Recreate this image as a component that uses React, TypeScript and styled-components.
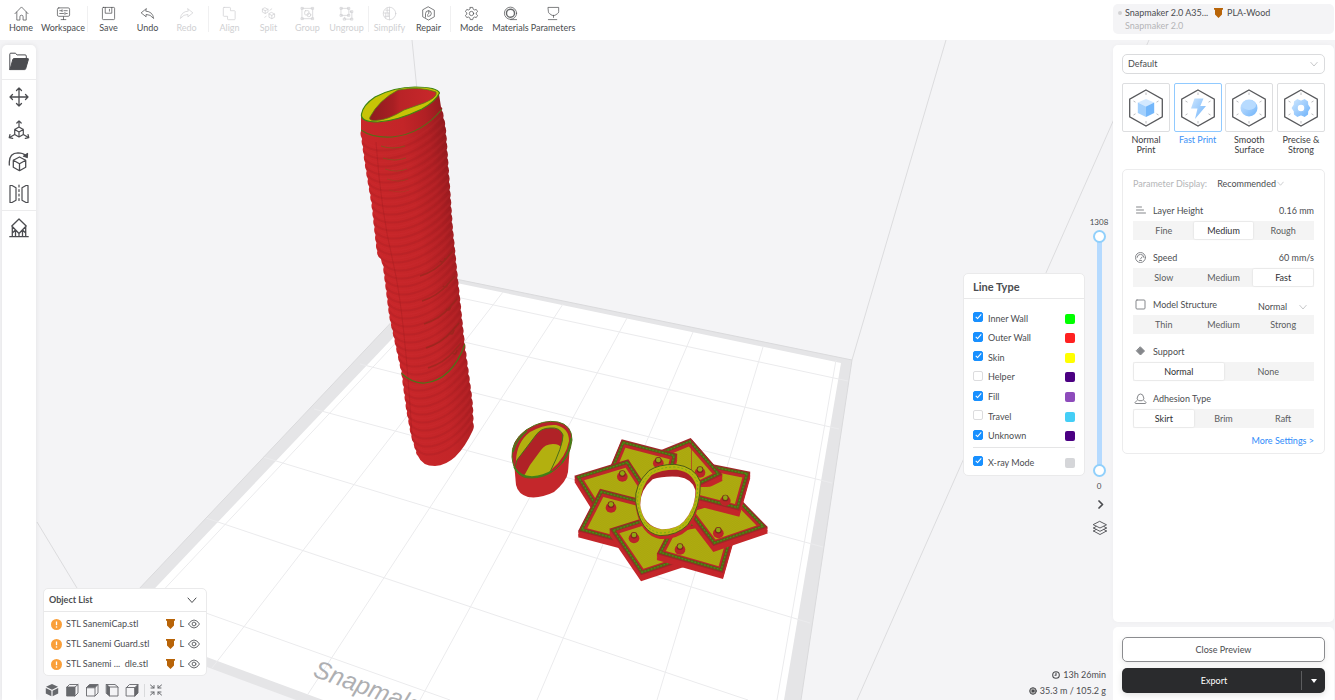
import React, { useState } from "react";
import styled, { createGlobalStyle } from "styled-components";

const Global = createGlobalStyle`
  *, *::before, *::after { box-sizing: border-box; }
  body { margin: 0; background: #f4f4f6; }
  body, button, select, input {
    font-family: Lato, "Open Sans", sans-serif;
    font-size: 9px;
    line-height: 12px;
    color: #4b4d50;
  }
  button, select { border: 0; padding: 0; background: none; cursor: pointer; }
  svg { display: block; flex: none; }
`;

/* ---------- layout ---------- */

const Page = styled.div`
  display: flex;
  flex-direction: column;
  height: 100vh;
  min-height: 700px;
  overflow: hidden;
`;

const TopBar = styled.header`
  display: flex;
  align-items: flex-start;
  justify-content: space-between;
  flex: none;
  height: 40px;
  padding-left: 1px;
  background: #fff;
`;

const ToolGroupRow = styled.nav`
  display: flex;
  align-items: center;
`;

const TopTool = styled.button<{ $width?: number }>`
  display: flex;
  flex-direction: column;
  align-items: center;
  width: ${(p) => p.$width ?? 39}px;
  padding-top: 6px;
  gap: 1px;
  white-space: nowrap;
  color: #4b4d50;
  &:disabled { color: #cfd0d2; cursor: default; }
`;

const TopDivider = styled.span`
  width: 1px;
  height: 26px;
  margin: 4px 1px 0 2px;
  background: #f0f0f1;
`;

const MachineBox = styled.section`
  display: grid;
  grid-template-columns: 93px 1fr;
  align-content: center;
  width: 221px;
  height: 30px;
  margin: 4px 1px 0 0;
  border-radius: 5px;
  background: #f4f4f6;
`;

const MachineLine = styled.div<{ $muted?: boolean }>`
  display: flex;
  align-items: center;
  gap: 3px;
  height: 13px;
  padding-left: ${(p) => (p.$muted ? 12 : 5)}px;
  white-space: nowrap;
  color: ${(p) => (p.$muted ? "#b4b5b7" : "#4b4d50")};
`;

const StatusDot = styled.i`
  flex: none;
  width: 4px;
  height: 4px;
  border-radius: 50%;
  background: #d2d2d4;
`;

const MaterialTag = styled.div`
  display: flex;
  align-items: center;
  gap: 4px;
  padding-left: 8px;
`;

const Main = styled.main`
  position: relative;
  display: grid;
  grid-template-columns: 38px 1fr 222px;
  flex: 1;
  min-height: 0;
`;

const SceneSvg = styled.svg`
  position: absolute;
  inset: 0;
  width: 100%;
  height: 100%;
`;

const SideTools = styled.nav`
  position: relative;
  display: flex;
  flex-direction: column;
  margin: 5px 2px 0;
  border-radius: 5px 5px 0 0;
  background: #fff;
  box-shadow: 0 0 5px rgba(0, 0, 0, 0.08);
`;

const SideGroup = styled.div<{ $last?: boolean }>`
  display: flex;
  flex-direction: column;
  border-bottom: ${(p) => (p.$last ? 0 : 1)}px solid #ececed;
`;

const SideTool = styled.button<{ $tall?: boolean }>`
  display: grid;
  place-items: center;
  height: ${(p) => (p.$tall ? 34 : 32)}px;
  color: #4b4c50;
`;

const Viewport = styled.section`
  position: relative;
  display: flex;
  justify-content: space-between;
`;

const Dock = styled.div`
  display: flex;
  flex-direction: column;
  align-self: flex-end;
  width: 164px;
  margin-left: 5px;
`;

const RightDock = styled.div`
  display: flex;
  flex-direction: column;
  align-items: flex-end;
  padding-top: 176px;
`;

const Floating = styled.section`
  border: 1px solid #eaeaeb;
  border-radius: 5px;
  background: #fff;
`;

/* ---------- object list ---------- */

const ObjectHeader = styled.button`
  display: flex;
  align-items: center;
  justify-content: space-between;
  width: 100%;
  height: 23px;
  padding: 0 9px 0 5px;
  border-bottom: 1px solid #e8e8e9;
  font-weight: 700;
  color: #4b4d50;
`;

const ObjectItems = styled.ul`
  margin: 0;
  padding: 2px 0 1px;
  list-style: none;
`;

const ObjectRow = styled.li`
  display: flex;
  align-items: center;
  height: 20px;
  padding: 0 6px 0 7px;
  white-space: pre;
`;

const ObjectName = styled.span`
  flex: 1;
  margin-left: 4px;
`;

const ExtruderMark = styled.span`
  display: flex;
  align-items: center;
  gap: 4px;
  margin-right: 4px;
`;

const IconButton = styled.button`
  display: grid;
  place-items: center;
  color: #66686c;
`;

const ViewButtons = styled.div`
  display: flex;
  align-items: center;
  height: 24px;
  padding: 4px 0 0 2px;
  gap: 6px;
  color: #77797e;
`;

const ViewDivider = styled.span`
  width: 1px;
  height: 13px;
  margin: 0 -2px 0 -1px;
  background: #d9dadc;
`;

/* ---------- line types ---------- */

const PreviewRow = styled.div`
  display: flex;
`;

const LinePanel = styled(Floating)`
  width: 122px;
  height: 203px;
  margin-top: 57px;
`;

const LineTitle = styled.h2`
  margin: 0;
  height: 25px;
  padding-left: 9px;
  border-bottom: 1px solid #e8e8e9;
  font-size: 11px;
  line-height: 25px;
  font-weight: 700;
  color: #4b4d50;
`;

const LineList = styled.div`
  display: flex;
  flex-direction: column;
  justify-content: space-between;
  height: 132px;
  margin: 12px 9px 0;
`;

const LineRow = styled.label`
  display: flex;
  align-items: center;
  height: 14px;
`;

const XrayArea = styled.div`
  margin: 4px 9px 0;
  padding-top: 7px;
  border-top: 1px solid #e5e5e6;
`;

const LineLabel = styled.span`
  flex: 1;
  padding: 1px 0 0 5px;
`;

const Swatch = styled.i<{ $color: string }>`
  width: 10px;
  height: 10px;
  margin-top: 1px;
  border-radius: 2px;
  background: ${(p) => p.$color};
`;

const Check = styled.input`
  appearance: none;
  display: grid;
  place-items: center;
  width: 10px;
  height: 10px;
  margin: 0 0 2px;
  border: 1px solid #dcdcde;
  border-radius: 2px;
  background: #fff;
  &:checked { border-color: #1890ff; background: #1890ff; }
  &:checked::after {
    content: "";
    width: 3px;
    height: 6px;
    margin-top: -2px;
    border: solid #fff;
    border-width: 0 1px 1px 0;
    transform: rotate(42deg);
  }
`;

/* ---------- layer slider ---------- */

const LayerColumn = styled.div`
  display: flex;
  flex-direction: column;
  align-items: center;
  width: 28px;
  font-size: 8px;
`;

const DoubleSlider = styled.div`
  display: grid;
  justify-items: center;
  width: 14px;
  height: 247px;
  margin: 2px 0 3px;
  background: linear-gradient(#b5daff, #b5daff) center / 5px 235px no-repeat;
`;

const LayerRange = styled.input`
  grid-area: 1 / 1;
  appearance: none;
  writing-mode: vertical-lr;
  direction: rtl;
  width: 14px;
  height: 247px;
  margin: 0;
  background: none;
  pointer-events: none;
  &::-webkit-slider-thumb {
    appearance: none;
    width: 13px;
    height: 13px;
    border: 2px solid #91d0fb;
    border-radius: 50%;
    background: #fff;
    pointer-events: auto;
  }
`;

const LayerButton = styled(IconButton)`
  height: 24px;
  padding-left: 2px;
  color: #4b4c50;
`;

const Stats = styled.div`
  display: flex;
  flex-direction: column;
  align-items: flex-end;
  margin-top: auto;
  padding: 0 7px 1px 0;
  color: #4b4c50;
`;

const Stat = styled.div`
  display: flex;
  align-items: center;
  gap: 3px;
  height: 16px;
`;

/* ---------- settings column ---------- */

const SettingsColumn = styled.aside`
  position: relative;
  display: flex;
  flex-direction: column;
  gap: 5px;
  padding: 5px 1px 0 0;
`;

const SettingsPanel = styled.section`
  flex: 1;
  padding: 9px 9px 0;
  border-radius: 5px;
  background: #fff;
  box-shadow: 0 0 4px rgba(0, 0, 0, 0.03);
`;

const ActionPanel = styled.section`
  display: flex;
  flex-direction: column;
  gap: 6px;
  padding: 10px 9px 7px;
  border-radius: 5px 5px 0 0;
  background: #fff;
`;

const SelectBox = styled.div<{ $framed?: boolean; $width?: string }>`
  display: flex;
  align-items: center;
  width: ${(p) => p.$width ?? "100%"};
  height: ${(p) => (p.$framed ? 20 : 16)}px;
  border: ${(p) => (p.$framed ? 1 : 0)}px solid #dadbdd;
  border-radius: 5px;
  padding-right: ${(p) => (p.$framed ? 6 : 0)}px;
  color: #b9babd;
  select {
    appearance: none;
    flex: 1;
    min-width: 0;
    height: 100%;
    padding-left: ${(p) => (p.$framed ? 5 : 0)}px;
    outline: 0;
  }
`;

const Presets = styled.div`
  display: flex;
  justify-content: space-between;
  height: 86px;
  margin-top: 9px;
`;

const Preset = styled.button<{ $active?: boolean }>`
  display: flex;
  flex-direction: column;
  align-items: center;
  width: 48px;
  line-height: 10px;
  color: ${(p) => (p.$active ? "#3d92f7" : "#3e4043")};
`;

const PresetFrame = styled.span<{ $active?: boolean }>`
  display: grid;
  place-items: center;
  width: 48px;
  height: 49px;
  margin-bottom: 3px;
  border: 1px solid ${(p) => (p.$active ? "#91caff" : "#dddee0")};
  border-radius: 2px;
`;

const ParamCard = styled.section`
  padding: 4px 10px 0;
  border: 1px solid #ececed;
  border-radius: 5px;
`;

const DisplayRow = styled.label`
  display: flex;
  align-items: center;
  gap: 10px;
  height: 19px;
  color: #b4b5b7;
`;

const ParamBlock = styled.div`
  margin-top: 7px;
`;

const ParamHead = styled.div`
  display: flex;
  align-items: center;
  height: 21px;
  padding-left: 1px;
`;

const ParamName = styled.span`
  flex: 1;
  padding-left: 6px;
`;

const LowSelect = styled.div`
  padding: 5px 7px 0 0;
`;

const Segments = styled.div`
  display: flex;
  height: 19px;
  padding: 1px;
  background: #f4f4f4;
`;

const Segment = styled.button<{ $active?: boolean }>`
  flex: 1;
  color: ${(p) => (p.$active ? "#2f3033" : "#5b5d60")};
  background: ${(p) => (p.$active ? "#fff" : "transparent")};
  box-shadow: ${(p) => (p.$active ? "0 0 2px rgba(0,0,0,.15)" : "none")};
  border-radius: 1px;
`;

const MoreRow = styled.div`
  display: flex;
  justify-content: flex-end;
  align-items: center;
  height: 25px;
  a { color: #2f8cfa; text-decoration: none; }
`;

const CloseButton = styled.button`
  height: 25px;
  border: 1px solid #8b8c8f;
  border-radius: 5px;
  background: #fff;
  box-shadow: 0 2px 6px rgba(0, 0, 0, 0.08);
`;

const ExportGroup = styled.div`
  display: flex;
  align-items: center;
  height: 25px;
  border-radius: 5px;
  background: #2a2b2d;
  box-shadow: 0 2px 6px rgba(0, 0, 0, 0.12);
`;

const ExportButton = styled.button`
  flex: 1;
  height: 19px;
  padding-left: 5px;
  border-right: 1px solid #5c5d5f;
  color: #fff;
`;

const ExportMenu = styled.button`
  display: grid;
  place-items: center;
  width: 23px;
  height: 25px;
  color: #fff;
`;

/* ---------- icons ---------- */

type IconProps = { size?: number; w?: number; box?: number; children: React.ReactNode };
const Icon = ({ size = 16, w = 1, box = 16, children }: IconProps) => (
  <svg width={size} height={size} viewBox={`0 0 ${box} ${box}`} fill="none" stroke="currentColor"
    strokeWidth={w} strokeLinecap="round" strokeLinejoin="round" aria-hidden="true">{children}</svg>
);

const topIcons: Record<string, React.ReactNode> = {
  Home: <path d="M1 8.2 8 1l7 7.2M3 6.5V15h3.3v-3.5q0-1.7 1.7-1.7t1.7 1.7V15H13V6.5" />,
  Workspace: <><rect x="1.5" y="2" width="13" height="9" rx="1.5" /><path d="M4 5h2m2.500 0H12M4 8h4m2.500 0H12M6.500 4v2M9.500 7v2M5.500 14.500h5M8 11.500v3" /></>,
  Save: <><rect x="1.500" y="1.500" width="13" height="13" rx="1" /><path d="M4.500 1.500v6.200h7V1.500M9 3.500v2" /></>,
  Undo: <path d="M6.500 3 1.200 7.300l5.300 4.200V9q4.500-.2 8 4.300Q13.700 6 6.500 5.500Z" />,
  Redo: <path d="M9.500 3l5.300 4.300-5.300 4.200V9Q5 8.800 1.500 13.300 2.300 6 9.500 5.500Z" />,
  Align: <path d="M2.200 1.500h6q.8 0 .8.800V5h4.200q.8 0 .8.800v8q0 .8-.8.800H6.700q-.8 0-.8-.8V11H2.200q-.8 0-.8-.8v-8Q1.500 1.500 2.200 1.500Z" />,
  Split: <path d="M4.500 2 7.500 3.500v3l-3 1.500-3-1.500v-3ZM1.500 3.500l3 1.500 3-1.500M4.500 5v3M11.500 7l3 1.500v3.500l-3 1.500-3-1.500V8.500ZM8.500 8.500l3 1.500 3-1.500M11.500 10v3.500M9.500 4.500l2-1.500M4 12l1.500-1" />,
  Group: <><rect x="2.500" y="2.500" width="11" height="11" /><path d="M1.500 1.500h2v2h-2ZM12.500 1.500h2v2h-2ZM1.500 12.500h2v2h-2ZM12.500 12.500h2v2h-2Z" /><rect x="5" y="5" width="4.500" height="4.500" rx="1" /><circle cx="9.500" cy="9.500" r="2" /></>,
  Ungroup: <><rect x="2.500" y="2.500" width="8" height="7.500" /><path d="M12 6h1.700v8H6v-2M1.500 1.500h2v2h-2ZM9.500 1.500h2v2h-2ZM1.500 9h2v2h-2ZM9.500 9h2v2h-2ZM12.700 5h2v2h-2ZM12.700 13h2v2h-2ZM5 13h2v2H5Z" /></>,
  Simplify: <><circle cx="8" cy="8" r="6.700" /><path d="M8 1.300v13.400M8 4.500H4M8 7.500H1.500M8 11H3M5.500 2v5M4 7.500V13M6.500 7.500V11" /></>,
  Repair: <><path d="M8 1l6.200 3.500v7L8 15l-6.200-3.500v-7Z" /><path d="M4.800 12V8.200Q5 5 8 5q2.800.2 3 3-.2 3-3 3L6.800 10.500M8.300 5.200V8L7 9.200" /></>,
  Mode: <><path d="M6.700 1.500h2.600l.5 1.900 1.400.8 1.900-.5 1.400 2.300L13 7.300v1.400l1.500 1.300-1.400 2.300-1.900-.5-1.400.8-.5 1.900H6.700l-.5-1.900-1.400-.8-1.900.5L1.500 10 3 8.700V7.300L1.500 6l1.400-2.300 1.900.5 1.400-.8Z" /><circle cx="8" cy="8" r="2.300" /></>,
  Materials: <><circle cx="8" cy="7.700" r="6.500" /><circle cx="8" cy="7.700" r="4.300" strokeWidth="1.500" /><path d="M8 14.500h6.500" /></>,
  Parameters: <><path d="M2.500 1.500h11V6q0 1.500-1.300 2.200L9.500 10h-3L3.800 8.200Q2.500 7.500 2.500 6ZM8 10v2.200M2.500 14.500h9" /></>,
};

const FolderIcon = () => (
  <Icon size={20} box={20}><path d="M.8 17V2.200q0-1 1-1h4.500l1.800 1.700h8q1.200 0 1.200 1.200V6.500" /><path fill="currentColor" d="M1 17.500 3.800 7.500q.3-1 1.300-1h13.700q.8 0 .6.900l-2.700 9.300q-.3.900-1.200.9H1Z" /></Icon>
);
const MoveIcon = () => (
  <Icon size={20} box={20} w={1.3}><path d="M10 1v18M1 10h18M7.500 3.500 10 1l2.500 2.500M7.500 16.500 10 19l2.500-2.500M3.500 7.500 1 10l2.500 2.500M16.500 7.500 19 10l-2.500 2.500" /></Icon>
);
const ScaleIcon = () => (
  <Icon size={22} box={22} w={1.200}><path d="M11 8l4.300 2.500v5L11 18l-4.300-2.500v-5ZM6.700 10.500 11 13l4.300-2.500M11 13v5M11 8V2M8.800 4 11 1.800 13.200 4M6.700 15.500 1.500 18.500M2 15.500l-.8 3.200 3.500.6M15.300 15.500l5.200 3M20 15.500l.8 3.200-3.500.6" /></Icon>
);
const RotateIcon = () => (
  <Icon size={22} box={22} w={1.300}><path d="M11.500 6l6.200 3.300v7l-6.200 3.400-6.200-3.400v-7ZM5.300 9.300l6.200 3.500 6.200-3.500M11.500 12.800v6.900M1.300 14V11Q1.500 2 10 1.800q5 0 7.500 2.500" /><path fill="currentColor" d="m19.500 2.500-.3 4-3.700-1.300Z" /></Icon>
);
const MirrorIcon = () => (
  <Icon size={20} box={20} w={1.200}><path d="M1 1.500h2l4 2.200v12.600l-4 2.200H1ZM19 1.500h-2l-4 2.200v12.600l4 2.200h2Z" /><path d="M10 1v18" strokeDasharray="2 2.500" /></Icon>
);
const SupportIcon = () => (
  <Icon size={20} box={20} w={1.300}><path d="M10 1l7.200 7L10 15.500 2.800 8ZM.8 18.700h18.400M3.300 9v9.500M6.500 12v6.500M10 16v2.500M13.500 12v6.500M16.700 9v9.500M3.300 15l3.200-3M16.700 15l-3.200-3" /></Icon>
);

const Down = ({ size = 8 }: { size?: number }) => <Icon size={size} box={10}><path d="M1 3l4 4.500L9 3" /></Icon>;

const Nozzle = () => (
  <svg width="9" height="10" viewBox="0 0 9 10" aria-hidden="true"><path fill="#b86408" d="M0 0h9v1.800H8v4.700L4.500 10 1 6.500V1.800H0Z" /></svg>
);
const Warning = () => (
  <svg width="11" height="11" viewBox="0 0 11 11" aria-hidden="true"><circle cx="5.500" cy="5.500" r="5.500" fill="#fa9f39" /><path d="M5.500 2.500v3.700" stroke="#fff" strokeWidth="1.300" /><circle cx="5.500" cy="8" r=".8" fill="#fff" /></svg>
);
const Eye = () => (
  <Icon size={12} box={12}><path d="M.5 6Q3 2 6 2t5.500 4Q9 10 6 10T.5 6Z" /><circle cx="6" cy="6" r="1.900" /></Icon>
);

const cubeViews: Record<string, React.ReactNode> = {
  Isometric: <><path d="M7 1l6 2.800L7 6.700 1 3.800ZM.8 5l5.600 2.700v5.600L.8 10.500ZM13.200 5 7.600 7.700v5.600l5.600-2.800Z" fill="currentColor" stroke="none" /></>,
  Front: <><path d="M2 4h8v9H2Z" fill="currentColor" /><path d="M2 4l2.500-2.500H13V10l-3 3M10 4l3-2.500" /></>,
  Top: <><path d="M1.500 4.500 4.500 1.500H13l-3 3Z" fill="currentColor" /><path d="M1.500 4.500V13H10V4.500M13 1.500V10l-3 3" /></>,
  Left: <><path d="M1.500 1.500 4.500 4v9l-3-2.500Z" fill="currentColor" /><path d="M4.500 4H13v9H4.500M1.500 1.500H10L13 4" /></>,
  Right: <><path d="M10 4.500l3-3V10l-3 3Z" fill="currentColor" /><path d="M1.500 4.500H10V13H1.500ZM1.500 4.500l3-3H13" /></>,
};

const HexFrame = ({ children }: { children: React.ReactNode }) => (
  <svg width="36" height="38" viewBox="0 0 36 38" fill="none" aria-hidden="true">
    <defs>
      <linearGradient id="blue" x1="0" y1="0" x2="1" y2="1"><stop offset="0" stopColor="#cbe5ff" /><stop offset="1" stopColor="#71b4fa" /></linearGradient>
    </defs>
    <path d="M18 1l16.300 9.200v17.600L18 37 1.700 27.800V10.200Z" stroke="#58595c" strokeWidth="1.300" />
    <path d="M18 3.500v2.500M18 32v2.500M5.500 12l2 1.200M28.500 13.200l2-1.200M5.500 26l2-1.200M28.500 24.800l2 1.200" stroke="#bcbdc0" strokeWidth="1" />
    {children}
  </svg>
);

const presetArt: Record<string, React.ReactNode> = {
  cube: <><path d="M18 10l8.200 3.500L18 17.500l-8.200-4Z" fill="#d3e9ff" /><path d="M9.800 13.500l8.200 4V28l-8.200-4Z" fill="#a2d0fd" /><path d="M26.200 13.500l-8.200 4V28l8.200-4Z" fill="#73b7fb" /></>,
  bolt: <path d="M14.500 9.500h9L20.300 17h5.700L15 30l2.500-10.500H11Z" fill="url(#blue)" />,
  ball: <><circle cx="18" cy="19" r="8.500" fill="url(#blue)" /><ellipse cx="18" cy="16" rx="7" ry="5" fill="#b7dbff" /></>,
  gear: <path fillRule="evenodd" stroke="url(#blue)" strokeWidth="1.500" strokeLinejoin="round" fill="url(#blue)" d="M14.500 10.800 18 12.500l3.500-1.700 2.800 2 .2 3.200L26.500 19l-2 3-.2 3.200-2.800 2L18 25.500l-3.500 1.700-2.800-2-.2-3.200L9.500 19l2-3 .2-3.200ZM18 15a3.800 3.800 0 1 0 0 8 3.800 3.800 0 1 0 0-8Z" />,
};

const paramIcons: Record<string, React.ReactNode> = {
  "Layer Height": <path d="M2.500 3h5M2.500 6h7M2.500 9h9" />,
  Speed: <><circle cx="6.500" cy="6.500" r="5" /><path d="M3 6.500Q3.500 3.500 6.500 3.300 9.500 3.500 10 6.500M6.500 8l1.500-2M5.500 9.500h2" /></>,
  "Model Structure": <rect x="2" y="2" width="9" height="9" rx="1" />,
  Support: <path d="M6.500 2l4 4-4 4-4-4Z" fill="currentColor" />,
  "Adhesion Type": <><path d="M4.500 8.500Q2 7 3.500 5 4 2 6.500 2t3 3q1.500 2-1 3.500ZM3 8.500 1 10.500q0 1 1 1h9q1 0 1-1l-2-2" /></>,
};

/* ---------- 3D scene ---------- */

type Pt = [number, number];

const bedLines: [number, number, number, number][] = [
  [433, 292, 848, 381], [408, 329, 839, 429], [360, 364, 832, 483], [314, 409, 823, 547],
  [263, 457, 810, 623], [206, 518, 748, 700], [147, 592, 450, 700],
  [140, 615, 452, 283], [503, 292, 212, 668], [563, 304, 308, 694], [627, 318, 420, 700],
  [693, 332, 537, 700], [763, 347, 657, 700], [836, 360, 777, 700],
];
const volumeLines: [number, number, number, number][] = [
  [412, 40, 417, 90], [946, 40, 852, 360], [1149, 40, 857, 700], [37, 522, 80, 593],
];

const leftEdge: Pt[] = [[361, 131], [366, 167], [372, 203], [378, 256], [383, 261], [390, 317], [402, 372], [407, 410], [412, 437], [418, 456]];
const rightEdge: Pt[] = [[441, 107], [445, 127], [452, 227], [457, 277], [464, 343], [472, 403], [473, 430]];

const walk = (edge: Pt[], y: number): number => {
  for (let i = 1; i < edge.length; i++) {
    const [x0, y0] = edge[i - 1];
    const [x1, y1] = edge[i];
    if (y <= y1) return x0 + ((x1 - x0) * (y - y0)) / (y1 - y0);
  }
  return edge[edge.length - 1][0];
};

/* Scalloped silhouette: small bumps of the wrapped handle along one side. */
const scallop = (edge: Pt[], out: number): string => {
  const end = edge[edge.length - 1][1];
  let d = "";
  for (let y = edge[0][1]; y < end; y += 8) {
    const next = Math.min(y + 8, end);
    const mid = (y + next) / 2;
    d += ` Q${(walk(edge, mid) + out * 2).toFixed(1)} ${mid.toFixed(1)} ${walk(edge, next).toFixed(1)} ${next}`;
  }
  return d;
};
const reverseScallop = (edge: Pt[], out: number): string => {
  const start = edge[0][1];
  let d = "";
  for (let y = edge[edge.length - 1][1]; y > start; y -= 8) {
    const next = Math.max(y - 8, start);
    const mid = (y + next) / 2;
    d += ` Q${(walk(edge, mid) + out * 2).toFixed(1)} ${mid.toFixed(1)} ${walk(edge, next).toFixed(1)} ${next}`;
  }
  return d;
};

const handlePath =
  `M361 115V131${scallop(leftEdge, -1)}Q422 466 435 466 457 465 473 430${reverseScallop(rightEdge, 1)}L439 94Z`;
const rib = (y: number) => {
  const x = walk(leftEdge, y);
  const e = walk(rightEdge, y - 22);
  const w = e - x;
  return `M${x} ${y}C${x + w * 0.12} ${y + 14} ${x + w * 0.62} ${y + 10} ${e} ${y - 24}`;
};
const ribs = Array.from({ length: 78 }, (_, i) => rib(139 + i * 4));

const insetQuad = (q: Pt[], d: number): Pt[] => {
  const area = q.reduce((s, p, i) => s + p[0] * q[(i + 1) % 4][1] - q[(i + 1) % 4][0] * p[1], 0);
  const sign = area > 0 ? 1 : -1;
  const lines = q.map((p, i) => {
    const n = q[(i + 1) % 4];
    const dx = n[0] - p[0];
    const dy = n[1] - p[1];
    const len = Math.hypot(dx, dy);
    return { x: p[0] - (sign * dy * d) / len, y: p[1] + (sign * dx * d) / len, dx, dy };
  });
  return lines.map((b, i) => {
    const a = lines[(i + 3) % 4];
    const t = ((b.x - a.x) * b.dy - (b.y - a.y) * b.dx) / (a.dx * b.dy - a.dy * b.dx);
    return [a.x + a.dx * t, a.y + a.dy * t] as Pt;
  });
};
const pts = (q: Pt[]) => q.map((p) => p.map((n) => n.toFixed(1)).join(",")).join(" ");

const petals: { quad: Pt[]; peg: Pt }[] = [
  { quad: [[572, 84], [668, 194], [530, 262], [430, 142]], peg: [600, 185] },
  { quad: [[365, 88], [532, 131], [500, 260], [310, 220]], peg: [475, 157] },
  { quad: [[385, 148], [223, 197], [300, 320], [465, 270]], peg: [367, 197] },
  { quad: [[300, 236], [234, 364], [390, 405], [470, 280]], peg: [333, 290] },
  { quad: [[328, 356], [423, 496], [590, 440], [490, 305]], peg: [402, 382] },
  { quad: [[515, 345], [470, 432], [669, 489], [720, 310]], peg: [540, 416] },
  { quad: [[550, 290], [640, 408], [804, 352], [700, 245]], peg: [655, 367] },
  { quad: [[751, 185], [718, 302], [560, 262], [590, 153]], peg: [676, 270] },
];

const Petal = ({ quad, peg }: { quad: Pt[]; peg: Pt }) => (
  <g>
    {[18, 14, 10, 6, 3].map((dy) => <polygon key={dy} points={pts(quad)} transform={`translate(0 ${dy})`} fill="#c4262a" />)}
    <polygon points={pts(quad)} fill="#a3232a" />
    <polygon points={pts(insetQuad(quad, 8))} fill="none" stroke="#625a16" strokeWidth="9" />
    <polygon points={pts(insetQuad(quad, 8))} fill="none" stroke="#3f9a14" strokeWidth="4" strokeDasharray="5 5" />
    <polygon points={pts(insetQuad(quad, 13))} fill="#be262a" />
    <polygon points={pts(insetQuad(quad, 19))} transform="translate(0 3)" fill="url(#skin)" />
    <ellipse cx={peg[0]} cy={peg[1] + 3} rx="16" ry="15" fill="#bd2428" />
    <circle cx={peg[0]} cy={peg[1] - 6} r="10" fill="#7d2a1c" />
    <circle cx={peg[0]} cy={peg[1] - 7} r="7" fill="#8fa812" />
  </g>
);

const Scene = () => (
  <SceneSvg viewBox="0 40 1335 660" preserveAspectRatio="xMidYMid slice" role="img" aria-label="Print preview">
    <defs>
      <linearGradient id="handleShade" gradientUnits="userSpaceOnUse" x1="372" y1="260" x2="464" y2="246">
        <stop offset="0" stopColor="#c9272a" /><stop offset=".55" stopColor="#c32528" /><stop offset=".8" stopColor="#b12024" /><stop offset="1" stopColor="#931b1f" />
      </linearGradient>
      <linearGradient id="cavity" x1="0" y1="0" x2="1" y2="0"><stop offset="0" stopColor="#8e1c1f" /><stop offset=".35" stopColor="#a81f23" /><stop offset=".45" stopColor="#b92327" /><stop offset="1" stopColor="#c9282b" /></linearGradient>
      <pattern id="skin" width="5" height="5" patternUnits="userSpaceOnUse" patternTransform="rotate(35)"><rect width="5" height="5" fill="#b1ae0f" /><path d="M0 2h5" stroke="#9f9c0e" strokeWidth="1.500" /></pattern>
      <clipPath id="topPetal"><rect x="575" y="60" width="120" height="170" /></clipPath>
      <clipPath id="handleClip"><path d={handlePath} /></clipPath>
    </defs>
    <rect x="-400" y="40" width="2200" height="660" fill="#f4f4f6" />
    <polygon points="436,275 852,360 801,700 296,700 102,628" fill="#e5e5e7" />
    <polygon points="447,281 841,363 784,700 323,700 120,625" fill="#fff" />
    <g stroke="#ebebed" strokeWidth="1">{bedLines.map(([a, b, c, d], i) => <line key={i} x1={a} y1={b} x2={c} y2={d} />)}</g>
    <g stroke="#dcdcde" strokeWidth="1">
      {volumeLines.map(([a, b, c, d], i) => <line key={i} x1={a} y1={b} x2={c} y2={d} />)}
      <path d="M102 628 436 275 852 360 801 700" fill="none" stroke="#dadadc" />
    </g>
    <text x="312" y="676" transform="rotate(20 312 676)" fontFamily="Liberation Sans, sans-serif" fontStyle="italic" fontSize="25" fill="#aeafb2">Snapmaker</text>

    <path d={handlePath} fill="url(#handleShade)" />
    <g clipPath="url(#handleClip)" fill="none">
      {ribs.map((d, i) => <path key={i} d={d} stroke={i % 2 ? "#8d171b" : "#d93436"} strokeOpacity={i % 2 ? 0.17 : 0.12} strokeWidth="2" />)}
      {[146, 158, 169, 179, 190].map((y, i) => <path key={y} d={`M${381 + i * 2} ${y}q12 4 ${24 - i} 0`} stroke="#7a5a1c" strokeWidth="1" strokeOpacity={0.8 - i * 0.14} />)}
      {[260, 285, 308, 332, 352].map((y, i) => <path key={y} d={`M${420 + i * 2} ${y + 16}q16-5 26-17l7-8M${440 + i * 3} ${y + 1}q4 3 5-3`} stroke="#8b2a1b" strokeWidth="1.500" strokeOpacity=".6" />)}
      <path d="M376 142q5 70 17 120t20 190" stroke="#951b1f" strokeOpacity=".3" />
      <path d="M361 130Q372 138 392 137 422 134 442 109" stroke="#596b18" strokeWidth="1.200" />
      <path d="M401 373Q413 384 425 383 452 380 465 344" stroke="#4c7418" strokeWidth="1.200" />
    </g>
    <path d="M361.500 114Q363 105 375 97 394 87 415 87q22 0 24.500 6Q436 101 422 109 397 121 378 122 360 122 361.500 114Z" fill="#c7c306" stroke="#3e8414" strokeWidth="1.200" />
    <path d="M370 117Q379 100 398 90 420 86 436 92 438 97 424 103L404 110Q388 120 376 120.500 368 121 370 117Z" fill="url(#cavity)" stroke="#5c7a14" strokeWidth=".8" />

    <path d="M514 462 516 485Q518 494 528 497 540 499 554 492 567 481 568 472L570 445Z" fill="#c4272b" />
    <path d="M512 457Q511 441 526 430 543 419 558 422 572 425 572 440 570 458 556 469 545 478 532 478 514 479 512 457Z" fill="#b7242a" stroke="#4d7716" />
    <path d="M516 460Q517 442 530 432 544 424 556 425 569 428 569 441 566 457 552 469 541 476 530 475 517 475 516 460Z" fill="#b3b00f" />
    <path d="M515 467 517 460 536 435Q541 428 550 428 560 427 563 435 563 446 550 472 538 478 526 475 517 473 515 467Z" fill="#b02227" />
    <path d="M524 476 530 465 541 450Q545 444 553 444 560 444 561 448 558 460 550 472 536 479 524 476Z" fill="#b3b00f" />
    <path d="M515 467 517 460 536 435Q541 428 550 428 560 427 563 435 563 446 550 472" fill="none" stroke="#4b6c18" />
    <path d="M513 452Q517 438 527 431M571 438Q570 451 562 463M514 467Q520 477 532 477 544 476 552 471" fill="none" stroke="#3c8418" strokeWidth="1.500" />

    <g transform="translate(500 410) scale(.33333)">
      {petals.map((p, i) => <Petal key={i} {...p} />)}
      <g clipPath="url(#topPetal)"><Petal {...petals[0]} /></g>
      <path d="M407 290Q402 235 447 187 480 163 530 165 590 175 601 215 603 300 566 358 530 390 480 387 420 375 407 290Z" fill="#c4262a" />
      <path d="M407 275Q402 225 447 182 475 163 525 163 585 170 601 215 603 290 563 345 530 377 480 377 420 368 407 275Z" fill="#b5b40f" stroke="#4c5c16" strokeWidth="3" />
      <path d="M413 275Q410 230 452 190 480 171 525 171 578 177 593 218 595 290 558 338 528 369 480 369 424 360 413 275Z" fill="none" stroke="#6fae14" strokeWidth="3" strokeDasharray="6 6" />
      <path d="M421 280Q422 228 455 195 485 178 530 179 575 185 588 225 592 280 556 330 528 360 485 358 425 350 421 280Z" fill="#ac2227" />
      <path d="M421 285Q420 240 458 208 490 197 535 200 577 206 586 240 588 290 552 334 528 359 485 358 428 347 421 285Z" fill="#fff" />
    </g>
  </SceneSvg>
);

/* ---------- data ---------- */

const lineTypes: [string, string, boolean][] = [
  ["Inner Wall", "#00ff00", true], ["Outer Wall", "#ff2121", true], ["Skin", "#ffff00", true],
  ["Helper", "#4b0082", false], ["Fill", "#8d4bbb", true], ["Travel", "#44cef6", false], ["Unknown", "#4b0082", true],
];

const params: { name: string; value?: string; select?: boolean; options: string[]; active?: string }[] = [
  { name: "Layer Height", value: "0.16 mm", options: ["Fine", "Medium", "Rough"], active: "Medium" },
  { name: "Speed", value: "60 mm/s", options: ["Slow", "Medium", "Fast"], active: "Fast" },
  { name: "Model Structure", select: true, options: ["Thin", "Medium", "Strong"] },
  { name: "Support", options: ["Normal", "None"], active: "Normal" },
  { name: "Adhesion Type", options: ["Skirt", "Brim", "Raft"], active: "Skirt" },
];

const toolGroups: { label: string; disabled?: boolean; width?: number }[][] = [
  [{ label: "Home", width: 40 }, { label: "Workspace", width: 44 }],
  [{ label: "Save" }, { label: "Undo" }, { label: "Redo", disabled: true }],
  [{ label: "Align", disabled: true }, { label: "Split", disabled: true }, { label: "Group", disabled: true }, { label: "Ungroup", disabled: true }],
  [{ label: "Simplify", disabled: true }, { label: "Repair" }],
  [{ label: "Mode" }, { label: "Materials" }, { label: "Parameters", width: 46 }],
];

const LineCheck = ({ label, color, initial }: { label: string; color: string; initial: boolean }) => {
  const [on, setOn] = useState(initial);
  return (
    <LineRow>
      <Check type="checkbox" checked={on} onChange={() => setOn(!on)} />
      <LineLabel>{label}</LineLabel>
      <Swatch $color={color} />
    </LineRow>
  );
};

const ParamSetting = ({ name, value, select, options, active }: (typeof params)[number]) => {
  const [chosen, setChosen] = useState(active);
  return (
    <ParamBlock>
      <ParamHead>
        <Icon size={13} box={13} w={1}><g stroke="#85878b" color="#85878b">{paramIcons[name]}</g></Icon>
        <ParamName>{name}</ParamName>
        {value}
        {select && (
          <LowSelect>
            <SelectBox $width="49px">
              <select aria-label={name}><option>Normal</option></select>
              <Down />
            </SelectBox>
          </LowSelect>
        )}
      </ParamHead>
      <Segments>
        {options.map((o) => (
          <Segment key={o} $active={o === chosen} aria-pressed={o === chosen} onClick={() => setChosen(o)}>{o}</Segment>
        ))}
      </Segments>
    </ParamBlock>
  );
};

export default function App() {
  const [top, setTop] = useState(1308);
  const [bottom, setBottom] = useState(0);
  const [preset, setPreset] = useState("Fast Print");

  return (
    <Page>
      <Global />
      <TopBar>
        <ToolGroupRow>
          {toolGroups.map((group, g) => (
            <React.Fragment key={g}>
              {g > 0 && <TopDivider />}
              {group.map((t) => (
                <TopTool key={t.label} $width={t.width} disabled={t.disabled}>
                  <Icon size={15} w={0.9}><g strokeOpacity=".85">{topIcons[t.label]}</g></Icon>
                  {t.label}
                </TopTool>
              ))}
            </React.Fragment>
          ))}
        </ToolGroupRow>
        <MachineBox>
          <MachineLine><StatusDot />Snapmaker 2.0 A35...</MachineLine>
          <MaterialTag><Nozzle />PLA-Wood</MaterialTag>
          <MachineLine $muted>Snapmaker 2.0</MachineLine>
        </MachineBox>
      </TopBar>

      <Main>
        <Scene />
        <SideTools>
          <SideGroup><SideTool $tall aria-label="Open"><FolderIcon /></SideTool></SideGroup>
          <SideGroup>
            <SideTool $tall aria-label="Move"><MoveIcon /></SideTool>
            <SideTool aria-label="Scale"><ScaleIcon /></SideTool>
            <SideTool aria-label="Rotate"><RotateIcon /></SideTool>
            <SideTool aria-label="Mirror"><MirrorIcon /></SideTool>
          </SideGroup>
          <SideGroup $last><SideTool $tall aria-label="Support"><SupportIcon /></SideTool></SideGroup>
        </SideTools>

        <Viewport>
          <Dock>
            <Floating>
              <ObjectHeader>Object List<Down size={10} /></ObjectHeader>
              <ObjectItems>
                {["STL SanemiCap.stl", "STL Sanemi Guard.stl", "STL Sanemi ...  dle.stl"].map((n) => (
                  <ObjectRow key={n}>
                    <Warning />
                    <ObjectName>{n}</ObjectName>
                    <ExtruderMark><Nozzle />L</ExtruderMark>
                    <IconButton aria-label={`Show ${n}`}><Eye /></IconButton>
                  </ObjectRow>
                ))}
              </ObjectItems>
            </Floating>
            <ViewButtons>
              {Object.entries(cubeViews).map(([name, art]) => (
                <IconButton key={name} aria-label={name}><Icon size={14} box={14} w={0.9}>{art}</Icon></IconButton>
              ))}
              <ViewDivider />
              <IconButton aria-label="Fit view">
                <Icon size={14} box={14}><path d="M1.500 2l3.500 3M5 2.500V5H2M12.500 2 9 5M9 2.500V5h3M1.500 12 5 9M5 11.500V9H2M12.500 12 9 9M9 11.500V9h3" /></Icon>
              </IconButton>
            </ViewButtons>
          </Dock>

          <RightDock>
            <PreviewRow>
              <LinePanel>
                <LineTitle>Line Type</LineTitle>
                <LineList>
                  {lineTypes.map(([label, color, on]) => <LineCheck key={label} label={label} color={color} initial={on} />)}
                </LineList>
                <XrayArea><LineCheck label="X-ray Mode" color="#d5d6d9" initial /></XrayArea>
              </LinePanel>
              <LayerColumn>
                {top}
                <DoubleSlider>
                  <LayerRange type="range" aria-label="Last layer" min={0} max={1308} value={top} onChange={(e) => setTop(+e.target.value)} />
                  <LayerRange type="range" aria-label="First layer" min={0} max={1308} value={bottom} onChange={(e) => setBottom(+e.target.value)} />
                </DoubleSlider>
                {bottom}
                <LayerButton aria-label="Collapse"><Icon size={9} box={9} w={1.7}><path d="M3 1l3.500 3.500L3 8" /></Icon></LayerButton>
                <LayerButton aria-label="Layers"><Icon size={16} w={0.9}><path d="M8 1.500l6.500 3.300L8 8 1.500 4.800ZM1.500 8 8 11.300 14.500 8M1.500 11 8 14.500l6.500-3.500M1.500 8l2.500-1.500M14.500 8 12 6.500M1.500 11 4 9.500M14.500 11 12 9.500" /></Icon></LayerButton>
              </LayerColumn>
            </PreviewRow>
            <Stats>
              <Stat><Icon size={8} box={8} w={1.100}><circle cx="4" cy="4" r="3.300" /><path d="M4 2v2.200H3" /></Icon>13h 26min</Stat>
              <Stat><Icon size={8} box={8} w={1}><circle cx="4" cy="4" r="3.300" fill="#aaa" /><circle cx="4" cy="4" r="1" fill="#222" /></Icon>35.3 m / 105.2 g</Stat>
            </Stats>
          </RightDock>
        </Viewport>

        <SettingsColumn>
          <SettingsPanel>
            <SelectBox $framed>
              <select aria-label="Profile"><option>Default</option></select>
              <Down />
            </SelectBox>
            <Presets>
              {[["Normal Print", "cube"], ["Fast Print", "bolt"], ["Smooth Surface", "ball"], ["Precise & Strong", "gear"]].map(([label, art]) => (
                <Preset key={label} $active={label === preset} onClick={() => setPreset(label)}>
                  <PresetFrame $active={label === preset}><HexFrame>{presetArt[art]}</HexFrame></PresetFrame>
                  {label}
                </Preset>
              ))}
            </Presets>
            <ParamCard>
              <DisplayRow>
                Parameter Display:
                <SelectBox $width="67px">
                  <select><option>Recommended</option></select>
                  <Down size={7} />
                </SelectBox>
              </DisplayRow>
              {params.map((p) => <ParamSetting key={p.name} {...p} />)}
              <MoreRow><a href="#more">More Settings &gt;</a></MoreRow>
            </ParamCard>
          </SettingsPanel>
          <ActionPanel>
            <CloseButton>Close Preview</CloseButton>
            <ExportGroup>
              <ExportButton>Export</ExportButton>
              <ExportMenu aria-label="Export options">
                <svg width="6" height="4" viewBox="0 0 6 4" aria-hidden="true"><path d="M0 0h6L3 4Z" fill="currentColor" /></svg>
              </ExportMenu>
            </ExportGroup>
          </ActionPanel>
        </SettingsColumn>
      </Main>
    </Page>
  );
}
